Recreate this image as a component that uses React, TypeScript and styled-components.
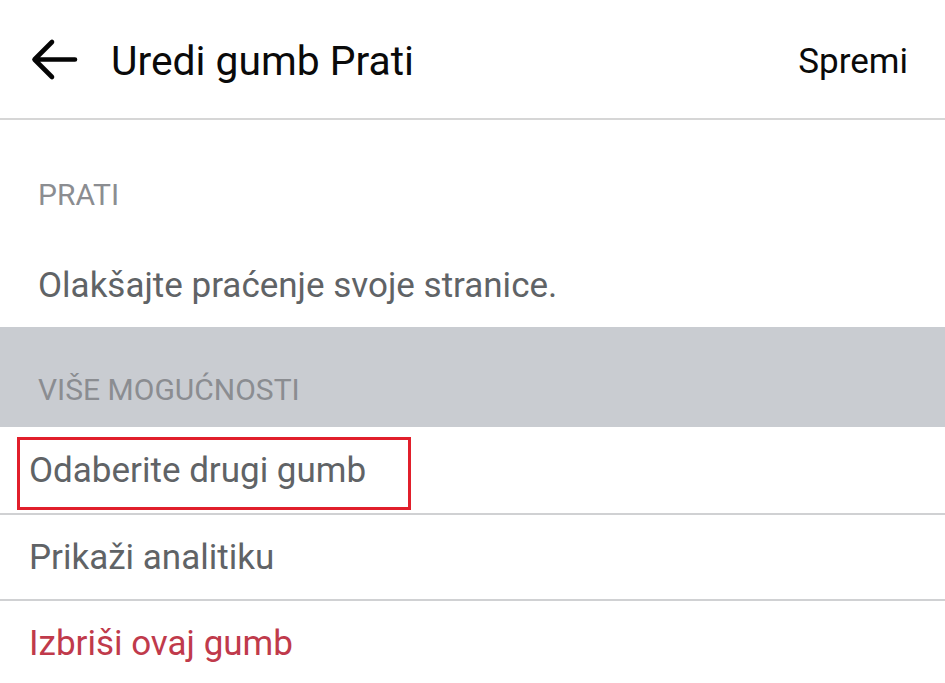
import styled, { createGlobalStyle } from "styled-components";

const GlobalStyle = createGlobalStyle`
  html, body {
    margin: 0;
    padding: 0;
    background: #ffffff;
  }
  body {
    font-family: Roboto, "Noto Sans", "Liberation Sans", sans-serif;
    -webkit-font-smoothing: antialiased;
  }
`;

type Item = { label: string; danger?: boolean; marked?: boolean };

const items: Item[] = [
  { label: "Odaberite drugi gumb", marked: true },
  { label: "Prikaži analitiku" },
  { label: "Izbriši ovaj gumb", danger: true },
];

function BackArrow() {
  return (
    <svg width="48" height="44" viewBox="0 0 48 44" fill="none">
      <path
        d="M45 21.5H5M22 4L4.5 21.5L22 39"
        stroke="#050505"
        strokeWidth="4.6"
        strokeLinecap="round"
        strokeLinejoin="round"
      />
    </svg>
  );
}

function App() {
  return (
    <>
      <GlobalStyle />
      <Page>
        <Header>
          <BackButton>
            <BackArrow />
          </BackButton>
          <Title>Uredi gumb Prati</Title>
          <SaveButton>Spremi</SaveButton>
        </Header>

        <Section>
          <SectionLabel>PRATI</SectionLabel>
          <Description>Olakšajte praćenje svoje stranice.</Description>
        </Section>

        <Band>
          <SectionLabel>VIŠE MOGUĆNOSTI</SectionLabel>
        </Band>

        <List>
          {items.map((item) => (
            <Row key={item.label}>
              <RowText $danger={item.danger}>{item.label}</RowText>
              {item.marked && <Highlight />}
            </Row>
          ))}
        </List>
      </Page>
    </>
  );
}

export default App;

const Page = styled.div`
  width: 945px;
  height: 683px;
  overflow: hidden;
  background: #ffffff;
`;

const Header = styled.header`
  height: 118px;
  display: flex;
  align-items: center;
  padding: 0 37px 0 30px;
  border-bottom: 2px solid #d6d6d6;
`;

const BackButton = styled.div`
  display: flex;
  align-items: center;
  margin-top: 2px;
`;

const Title = styled.h1`
  flex: 1;
  margin: 4px 0 0 33px;
  font-size: 40.8px;
  font-weight: 400;
  color: #0a0a0a;
  letter-spacing: 0;
`;

const SaveButton = styled.span`
  font-size: 35px;
  margin-top: 4px;
  color: #0a0a0a;
`;

const Section = styled.section`
  padding: 58px 38px 0;
  height: 207px;
  box-sizing: border-box;
`;

const SectionLabel = styled.div`
  font-size: 30px;
  color: #8b8d91;
  line-height: 34px;
`;

const Description = styled.p`
  margin: 54px 0 0;
  font-size: 35px;
  line-height: 40px;
  color: #606366;
`;

const Band = styled.div`
  height: 100px;
  background: #c9ccd1;
  padding: 46px 38px 0;
  box-sizing: border-box;
`;

const List = styled.div`
  display: flex;
  flex-direction: column;
`;

const Row = styled.div`
  position: relative;
  height: 86px;
  display: flex;
  align-items: center;
  padding: 0 29px;
  box-sizing: border-box;
  & + & {
    border-top: 2px solid #d0d1d3;
  }
`;

const RowText = styled.span<{ $danger?: boolean }>`
  font-size: 35px;
  color: ${(p) => (p.$danger ? "#c03a4b" : "#606366")};
`;

const Highlight = styled.div`
  position: absolute;
  left: 17px;
  top: 10px;
  width: 394px;
  height: 73px;
  border: 3px solid #e11f2b;
  box-sizing: border-box;
`;
